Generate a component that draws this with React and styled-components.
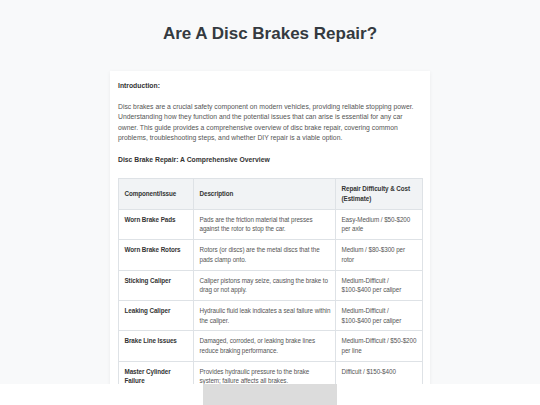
import React from "react";
import styled, { createGlobalStyle } from "styled-components";

const GlobalStyle = createGlobalStyle`
  html, body {
    margin: 0;
    padding: 0;
    background: #f8f9fa;
    font-family: "Liberation Sans", Arial, sans-serif;
  }
`;

const Page = styled.div`
  padding: 23.5px 0 60px;
`;

const Title = styled.h1`
  margin: 0 0 27.5px;
  text-align: center;
  font-size: 17px;
  line-height: 20px;
  font-weight: bold;
  color: #343a40;
`;

const Card = styled.div`
  width: 320px;
  box-sizing: border-box;
  margin: 0 auto;
  padding: 9.5px 8px;
  background: #ffffff;
  box-shadow: 0 1px 4px rgba(0, 0, 0, 0.06);
  font-size: 6.8px;
  line-height: 10.2px;
  color: #555;
`;

const Label = styled.p`
  margin: 0 0 ${(p) => p.$gap || "11.5px"};
  font-weight: bold;
  color: #333;
`;

const Text = styled.p`
  margin: 0 0 11.6px;
`;

const Table = styled.table`
  width: 304px;
  border-collapse: collapse;
  table-layout: fixed;
  margin-bottom: 12px;
  font-size: 6.3px;
  line-height: 9.7px;
  letter-spacing: -0.075px;
`;

const Cell = styled.td`
  border: 1px solid #dee2e6;
  padding: 5px 3.75px 5px 5.5px;
  vertical-align: top;
  text-align: left;
  font-weight: ${(p) => (p.$strong ? "bold" : "normal")};
  color: ${(p) => (p.$strong ? "#333" : "#555")};
`;

const HeadCell = styled.th`
  border: 1px solid #dee2e6;
  padding: 5px 3.75px 5px 5.5px;
  background: #f1f3f5;
  text-align: left;
  vertical-align: middle;
  font-weight: bold;
  color: #333;
`;

const BottomBar = styled.div`
  position: fixed;
  left: 0;
  right: 0;
  bottom: 0;
  height: 21px;
  background: #ffffff;
  display: flex;
  justify-content: center;
`;

const AdSlot = styled.div`
  width: 134px;
  height: 100%;
  background: #dcdcdc;
`;

const rows = [
  ["Worn Brake Pads", "Pads are the friction material that presses against the rotor to stop the car.", "Easy-Medium / $50-$200 per axle"],
  ["Worn Brake Rotors", "Rotors (or discs) are the metal discs that the pads clamp onto.", "Medium / $80-$300 per rotor"],
  ["Sticking Caliper", "Caliper pistons may seize, causing the brake to drag or not apply.", "Medium-Difficult / $100-$400 per caliper"],
  ["Leaking Caliper", "Hydraulic fluid leak indicates a seal failure within the caliper.", "Medium-Difficult / $100-$400 per caliper"],
  ["Brake Line Issues", "Damaged, corroded, or leaking brake lines reduce braking performance.", "Medium-Difficult / $50-$200 per line"],
  ["Master Cylinder Failure", "Provides hydraulic pressure to the brake system; failure affects all brakes.", "Difficult / $150-$400"],
  ["Warped Rotors", "Uneven heating can cause rotors to warp, creating vibration when braking.", "Medium / $80-$300 per rotor"],
];

export default function App() {
  return (
    <Page>
      <GlobalStyle />
      <Title>Are A Disc Brakes Repair?</Title>
      <Card>
        <Label>Introduction:</Label>
        <Text>
          Disc brakes are a crucial safety component on modern vehicles, providing reliable stopping power.
          Understanding how they function and the potential issues that can arise is essential for any car
          owner. This guide provides a comprehensive overview of disc brake repair, covering common
          problems, troubleshooting steps, and whether DIY repair is a viable option.
        </Text>
        <Label $gap="13.5px">Disc Brake Repair: A Comprehensive Overview</Label>
        <Table>
          <colgroup>
            <col style={{ width: 75 }} />
            <col style={{ width: 142 }} />
            <col style={{ width: 87 }} />
          </colgroup>
          <thead>
            <tr>
              <HeadCell>Component/Issue</HeadCell>
              <HeadCell>Description</HeadCell>
              <HeadCell>Repair Difficulty &amp; Cost (Estimate)</HeadCell>
            </tr>
          </thead>
          <tbody>
            {rows.map(([name, desc, cost]) => (
              <tr key={name}>
                <Cell $strong>{name}</Cell>
                <Cell>{desc}</Cell>
                <Cell>{cost}</Cell>
              </tr>
            ))}
          </tbody>
        </Table>
      </Card>
      <BottomBar>
        <AdSlot />
      </BottomBar>
    </Page>
  );
}
